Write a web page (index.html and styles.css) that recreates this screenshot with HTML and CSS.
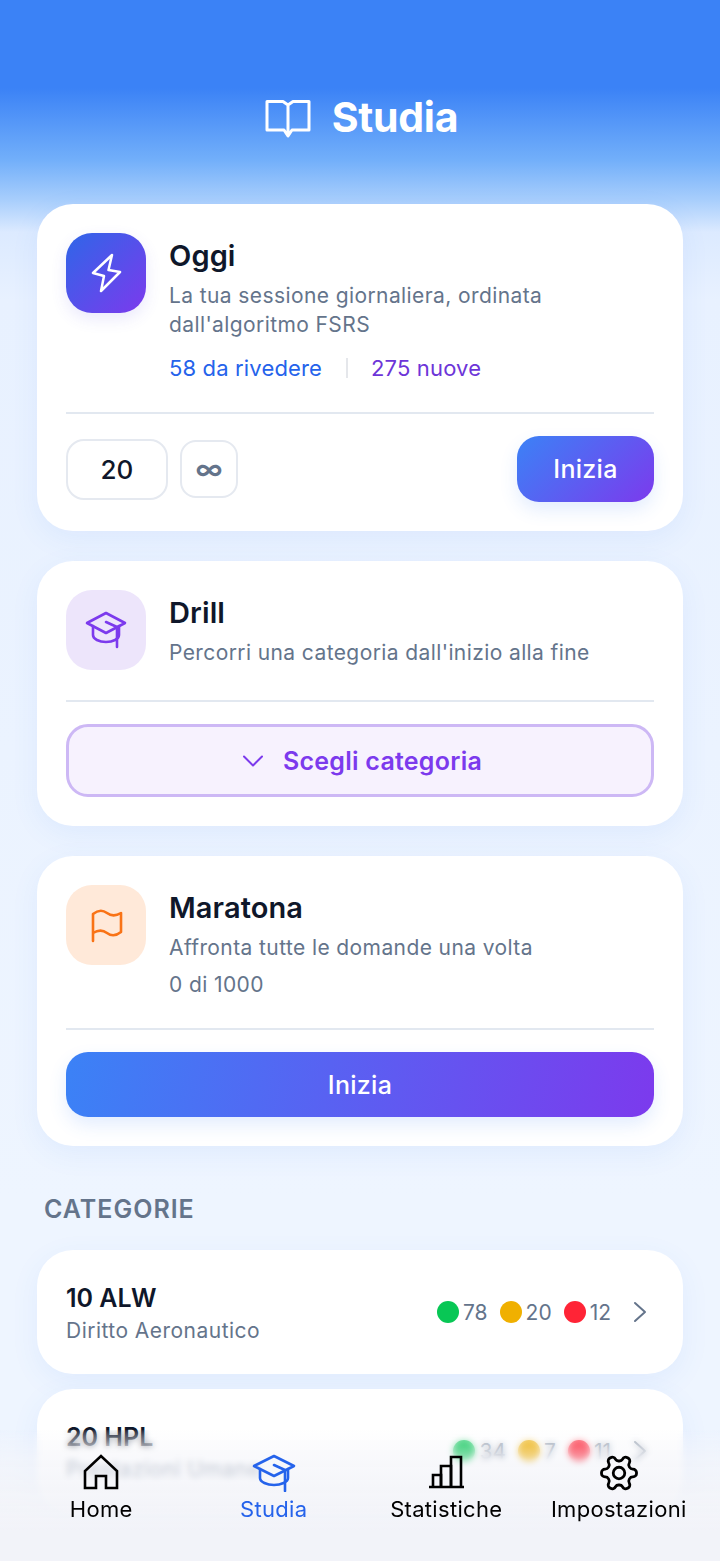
FILE: index.html
```html
<!DOCTYPE html>
<html lang="it">
<head>
  <meta charset="UTF-8" />
  <meta name="viewport" content="width=device-width, initial-scale=1.0" />
  <title>Studia</title>
  <link rel="stylesheet" href="styles.css">
</head>
<body>
  <div class="page">
    <header class="header">
      <svg class="header-icon" viewBox="0 0 46 40" fill="none" stroke="#fff" stroke-width="3" stroke-linejoin="round" stroke-linecap="round">
        <path d="M23 6L18 2.500H2V31H19L23 37L27 31H44V2.500H28L23 6V33" />
      </svg>
      <h1>Studia</h1>
    </header>

    <section class="card">
      <div class="card-top">
        <div class="tile tile-grad">
          <svg width="33" height="42" viewBox="0 0 33 42" fill="none" stroke="#fff" stroke-width="2.5" stroke-linejoin="round">
            <path d="M22 3L3 21L14 24L11 39L30 20L18.5 18Z" />
          </svg>
        </div>
        <div class="card-text">
          <h2>Oggi</h2>
          <p>La tua sessione giornaliera, ordinata<br>dall'algoritmo FSRS</p>
          <div class="counts">
            <span class="blue">58 da rivedere</span>
            <i class="sep"></i>
            <span class="purple">275 nuove</span>
          </div>
        </div>
      </div>
      <hr>
      <div class="controls">
        <div class="num-box">20</div>
        <div class="inf-box">∞</div>
        <button class="btn btn-small">Inizia</button>
      </div>
    </section>

    <section class="card">
      <div class="card-top">
        <div class="tile tile-purple">
          <svg width="42" height="38" viewBox="0 0 42 38" fill="none" stroke="#7c3aed" stroke-width="2.6" stroke-linejoin="round" stroke-linecap="round">
            <path d="M21 2L40 12L21 22L2 12Z" />
            <path d="M8 15V24C8 28 14 31 21 31C28 31 34 28 34 24V15" />
            <path d="M21 11L32 16V36" />
          </svg>
        </div>
        <div class="card-text">
          <h2>Drill</h2>
          <p>Percorri una categoria dall'inizio alla fine</p>
        </div>
      </div>
      <hr class="hr-drill">
      <button class="choose">
        <svg width="22" height="14" viewBox="0 0 22 14" fill="none" stroke="#7c3aed" stroke-width="2" stroke-linecap="round" stroke-linejoin="round"><path d="M2 2.500L11 11.500L20 2.500" /></svg>
        Scegli categoria
      </button>
    </section>

    <section class="card">
      <div class="card-top">
        <div class="tile tile-orange">
          <svg width="33" height="35" viewBox="0 0 33 35" fill="none" stroke="#f97316" stroke-width="2.6" stroke-linejoin="round" stroke-linecap="round">
            <path d="M3 33V6C8 2 13 2 17 5S26 8 31 5V24C26 28 21 28 17 25S8 22 3 25" />
          </svg>
        </div>
        <div class="card-text">
          <h2>Maratona</h2>
          <p>Affronta tutte le domande una volta</p>
          <p class="progress">0 di 1000</p>
        </div>
      </div>
      <hr class="hr-marathon">
      <button class="btn btn-wide">Inizia</button>
    </section>

    <h3 class="section-label">CATEGORIE</h3>

    <a class="row">
      <div class="row-text">
        <strong>10 ALW</strong>
        <span>Diritto Aeronautico</span>
      </div>
      <div class="stats">
        <i class="dot green"></i><span class="stat">78</span>
        <i class="dot amber"></i><span class="stat">20</span>
        <i class="dot red"></i><span class="stat">12</span>
      </div>
      <svg class="chev" width="14" height="22" viewBox="0 0 14 22" fill="none" stroke="#64748b" stroke-width="2" stroke-linecap="round" stroke-linejoin="round"><path d="M2 2L12 11L2 20" /></svg>
    </a>

    <a class="row">
      <div class="row-text">
        <strong>20 HPL</strong>
        <span>Prestazioni Umane</span>
      </div>
      <div class="stats">
        <i class="dot green"></i><span class="stat">34</span>
        <i class="dot amber"></i><span class="stat">7</span>
        <i class="dot red"></i><span class="stat">11</span>
      </div>
      <svg class="chev" width="14" height="22" viewBox="0 0 14 22" fill="none" stroke="#64748b" stroke-width="2" stroke-linecap="round" stroke-linejoin="round"><path d="M2 2L12 11L2 20" /></svg>
    </a>
  </div>

  <nav class="tabbar">
    <div class="tab">
      <svg width="36" height="36" viewBox="0 0 36 36" fill="none" stroke="#000" stroke-width="2.6" stroke-linejoin="miter">
        <path d="M2 34V17L18 2L34 17V34H23V22H13V34Z" />
      </svg>
      <span>Home</span>
    </div>
    <div class="tab active">
      <svg class="cap-icon" width="44" height="38" viewBox="0 0 44 38" fill="none" stroke="#2563eb" stroke-width="2.600" stroke-linejoin="round" stroke-linecap="round">
        <path d="M22 2L42 12L22 22L2 12Z" />
        <path d="M8 15V24C8 28 15 31 22 31C29 31 36 28 36 24V15" />
        <path d="M22 11L33 16V37" />
      </svg>
      <span>Studia</span>
    </div>
    <div class="tab">
      <svg width="36" height="36" viewBox="0 0 36 36" fill="none" stroke="#000" stroke-width="2.600">
        <path d="M1 33H36" />
        <path d="M5 33V21H13V33" />
        <path d="M13 33V12H23V33" />
        <path d="M23 33V3H33V33" />
      </svg>
      <span>Statistiche</span>
    </div>
    <div class="tab">
      <svg class="gear-icon" width="42" height="42" viewBox="0 0 24 24" fill="none" stroke="#000" stroke-width="1.600" stroke-linejoin="round">
        <g transform="rotate(90 12 12)">
          <path d="M12.220 2h-.44a2 2 0 0 0-2 2v.18a2 2 0 0 1-1 1.730l-.43.25a2 2 0 0 1-2 0l-.15-.08a2 2 0 0 0-2.730.73l-.22.38a2 2 0 0 0 .73 2.730l.15.1a2 2 0 0 1 1 1.720v.51a2 2 0 0 1-1 1.740l-.15.09a2 2 0 0 0-.73 2.730l.22.38a2 2 0 0 0 2.730.73l.15-.08a2 2 0 0 1 2 0l.43.25a2 2 0 0 1 1 1.730V20a2 2 0 0 0 2 2h.44a2 2 0 0 0 2-2v-.18a2 2 0 0 1 1-1.730l.43-.25a2 2 0 0 1 2 0l.15.08a2 2 0 0 0 2.730-.73l.22-.39a2 2 0 0 0-.73-2.730l-.15-.08a2 2 0 0 1-1-1.740v-.5a2 2 0 0 1 1-1.740l.15-.09a2 2 0 0 0 .73-2.730l-.22-.38a2 2 0 0 0-2.730-.73l-.15.08a2 2 0 0 1-2 0l-.43-.25a2 2 0 0 1-1-1.730V4a2 2 0 0 0-2-2z" />
          <circle cx="12" cy="12" r="3.300" />
        </g>
      </svg>
      <span>Impostazioni</span>
    </div>
  </nav>
</body>
</html>
```

FILE: styles.css
```css
html, body {
  margin: 0;
  padding: 0;
}
body {
  width: 720px;
  height: 1561px;
  overflow: hidden;
  position: relative;
  font-family: Inter, "Noto Sans", sans-serif;
  background: #eff6ff;
}
.page {
  height: 1561px;
  box-sizing: border-box;
  padding: 0 37px;
  background: linear-gradient(180deg, #3b82f6 0, #3b82f6 88px, #72affa 160px, #a8cefc 200px, #dceaff 232px, #e8f1ff 300px, #eef5ff 1200px);
}
.header {
  height: 204px;
  box-sizing: border-box;
  padding: 95px 0 0 3px;
  display: flex;
  justify-content: center;
  align-items: flex-start;
  gap: 21px;
}
.header-icon {
  width: 46px;
  height: 40px;
  margin-top: 4px;
}
h1 {
  margin: 0;
  color: #fff;
  font-size: 41px;
  line-height: 44px;
  font-weight: 700;
  letter-spacing: -0.3px;
}
.card {
  background: #fff;
  border-radius: 36px;
  padding: 29px;
  margin-bottom: 30px;
  box-shadow: 0 8px 28px rgba(59, 130, 246, 0.08);
}
.card-top {
  display: flex;
  gap: 23px;
}
.tile {
  width: 80px;
  height: 80px;
  flex: none;
  border-radius: 26px;
  display: flex;
  align-items: center;
  justify-content: center;
}
.tile-grad {
  background: linear-gradient(135deg, #2f66e8, #7c3aed);
  box-shadow: 0 6px 16px rgba(79, 70, 229, 0.12);
}
.tile-purple {
  background: #ede5fb;
}
.tile-orange {
  background: #ffe9d9;
}
.card-text {
  padding-top: 5px;
}
h2 {
  margin: 0 0 7px;
  font-size: 29px;
  line-height: 36px;
  font-weight: 600;
  letter-spacing: 0.1px;
  color: #0f172a;
}
.card-text p {
  margin: 0;
  font-size: 21px;
  line-height: 29px;
  letter-spacing: 0.4px;
  color: #64748b;
}
.card-text .progress {
  margin-top: 8px;
}
.counts {
  display: flex;
  align-items: center;
  margin-top: 14px;
  font-size: 22px;
  line-height: 30px;
  letter-spacing: 0.15px;
}
.blue {
  color: #2563eb;
}
.purple {
  color: #6d35d8;
}
.sep {
  width: 2px;
  height: 20px;
  margin: 0 23px 0 24px;
  background: #e5e7eb;
}
hr {
  border: 0;
  height: 2px;
  background: #e2e8f0;
  margin: 29px 0 22px;
}
.hr-drill {
  margin: 30px 0 22px;
}
.hr-marathon {
  margin: 29px 0 22px;
}
.controls {
  display: flex;
  align-items: center;
  gap: 12px;
}
.num-box {
  width: 102px;
  height: 61px;
  box-sizing: border-box;
  border: 2px solid #e5e9f0;
  border-radius: 18px;
  display: flex;
  align-items: center;
  justify-content: center;
  font-size: 26px;
  font-weight: 500;
  color: #0f172a;
}
.inf-box {
  width: 58px;
  height: 58px;
  box-sizing: border-box;
  border: 2px solid #e5e9f0;
  border-radius: 16px;
  display: flex;
  align-items: center;
  justify-content: center;
  font-size: 28px;
  font-weight: 600;
  color: #64748b;
}
.btn {
  border: 0;
  height: 66px;
  border-radius: 22px;
  color: #fff;
  font-family: inherit;
  font-size: 25px;
  font-weight: 500;
  letter-spacing: 0.3px;
  background: linear-gradient(135deg, #3b82f6, #7c3aed);
  box-shadow: 0 8px 18px rgba(59, 130, 246, 0.14);
}
.btn-small {
  width: 137px;
  margin-left: auto;
}
.btn-wide {
  display: block;
  width: 100%;
  height: 65px;
  background: linear-gradient(100deg, #3b82f6, #7c3aed);
}
.choose {
  width: 100%;
  height: 73px;
  box-sizing: border-box;
  padding: 0 0 0 4px;
  border: 3px solid #cdb8f5;
  border-radius: 22px;
  background: #f7f2fe;
  display: flex;
  align-items: center;
  justify-content: center;
  gap: 19px;
  font-family: inherit;
  font-size: 25px;
  font-weight: 600;
  letter-spacing: 0.25px;
  color: #7c3aed;
}
.section-label {
  margin: 48px 0 26px 7px;
  font-size: 25px;
  line-height: 30px;
  font-weight: 600;
  letter-spacing: 1px;
  color: #64748b;
}
.row {
  height: 124px;
  box-sizing: border-box;
  padding: 0 36px 0 29px;
  margin-bottom: 15px;
  background: #fff;
  border-radius: 36px;
  display: flex;
  align-items: center;
  box-shadow: 0 8px 28px rgba(59, 130, 246, 0.08);
}
.row-text {
  flex: 1;
  display: flex;
  flex-direction: column;
  gap: 3px;
  padding-top: 2px;
}
.row-text strong {
  font-size: 25px;
  line-height: 32px;
  font-weight: 600;
  color: #0f172a;
}
.row-text span {
  font-size: 21px;
  line-height: 28px;
  letter-spacing: 0.47px;
  color: #64748b;
}
.stats {
  display: flex;
  align-items: center;
  font-size: 21px;
  color: #64748b;
}
.dot {
  width: 22px;
  height: 22px;
  border-radius: 50%;
  margin-right: 4px;
}
.stat {
  margin-right: 12px;
}
.green {
  background: #08c755;
}
.amber {
  background: #f0b000;
}
.red {
  background: #ff2436;
}
.chev {
  margin-left: 10px;
}
.tabbar {
  position: absolute;
  z-index: 1;
  left: 0;
  right: 0;
  bottom: 0;
  height: 131px;
  box-sizing: border-box;
  padding: 24px 15px 0;
  display: grid;
  grid-template-columns: repeat(4, 1fr);
}
/* blur gets stronger further down, the tint sits on top of it */
.tabbar::before {
  content: "";
  position: absolute;
  z-index: -2;
  inset: 0;
  backdrop-filter: blur(3px);
  -webkit-mask-image: linear-gradient(180deg, rgba(0, 0, 0, 0.25) 0, #000 30px);
  mask-image: linear-gradient(180deg, rgba(0, 0, 0, 0.25) 0, #000 30px);
}
.tabbar::after {
  content: "";
  position: absolute;
  z-index: -1;
  inset: 0;
  background: linear-gradient(180deg, rgba(243, 244, 249, 0) 0, rgba(243, 244, 249, 0.6) 30px, rgba(243, 244, 249, 0.9) 70px, #f2f3f9 100px);
}
.tab {
  display: flex;
  flex-direction: column;
  align-items: center;
  gap: 5px;
  font-size: 22px;
  line-height: 28px;
  letter-spacing: 0.3px;
  color: #000;
}
.tab svg {
  display: block;
}
.tab .cap-icon {
  margin-bottom: -2px;
}
.tab .gear-icon {
  margin: -2px 0 -4px;
}
.tab.active {
  color: #2563eb;
}
```
